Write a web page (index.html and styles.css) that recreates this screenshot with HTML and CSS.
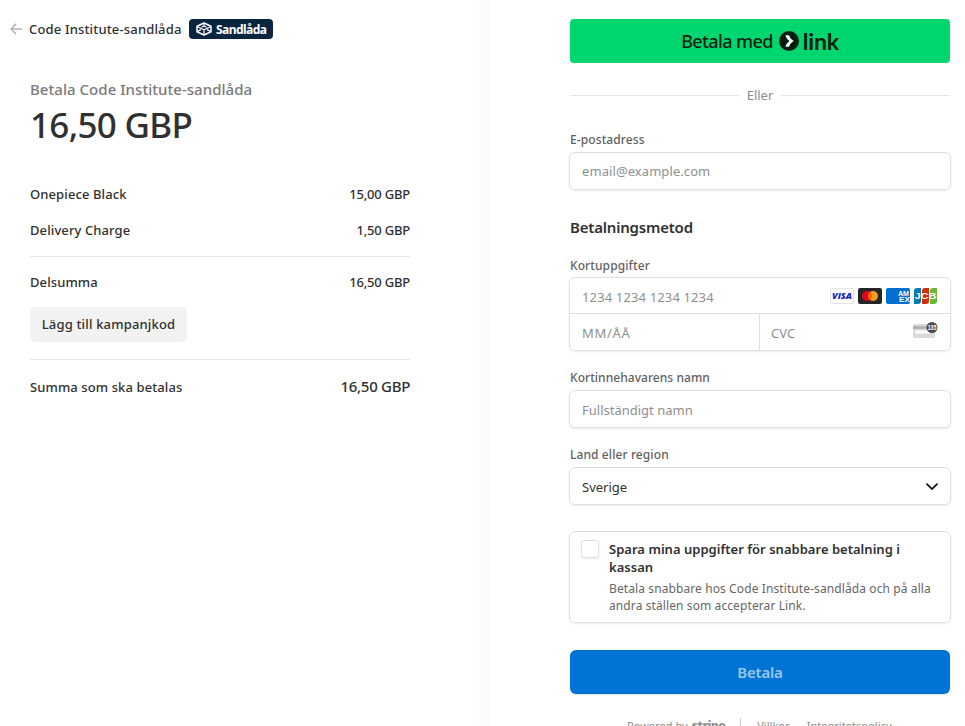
FILE: index.html
```html
<!DOCTYPE html>
<html lang="sv">
<head>
<meta charset="utf-8">
<title>Code Institute-sandlåda</title>
<link rel="stylesheet" href="styles.css">
</head>
<body>
<div class="checkout">
  <section class="summary">
    <header class="merchant">
      <svg class="back" width="12" height="12" viewBox="0 0 12 12"><path d="M6 .9 1 6l5 5.1M1 6h11" fill="none" stroke="#b3b3b3" stroke-width="1.5"/></svg>
      <span class="merchant-name">Code Institute-sandlåda</span>
      <span class="badge">
        <svg width="16" height="14" viewBox="0 0 16 14" fill="none" stroke="#fff" stroke-width="1.5" stroke-linejoin="round"><path d="M8 1 15 4.200v5.600L8 13 1 9.800V4.200z"/><path d="M1.500 4.700 8 7.800l6.500-3.100M8 7.800V13M1.500 9.400 5 7.600M14.500 9.400 11 7.600M8 1v2.500M5.500 5.200 8 4l2.500 1.200" stroke-width="1.200"/></svg>
        <span class="badge-text">Sandlåda</span>
      </span>
    </header>
    <h1 class="pay-title">Betala Code Institute-sandlåda</h1>
    <div class="amount">16,50 GBP</div>
    <div class="items">
      <div class="row"><span>Onepiece Black</span><span class="price">15,00 GBP</span></div>
      <div class="row"><span>Delivery Charge</span><span class="price">1,50 GBP</span></div>
    </div>
    <div class="subtotal">
      <div class="row"><span>Delsumma</span><span class="price">16,50 GBP</span></div>
      <button class="promo">Lägg till kampanjkod</button>
    </div>
    <div class="row total"><span>Summa som ska betalas</span><span class="total-price">16,50 GBP</span></div>
  </section>

  <main class="payment">
    <button class="link-pay">
      <span class="link-text">Betala med</span>
      <svg width="20" height="20" viewBox="0 0 20 20"><circle cx="10" cy="10" r="10" fill="#011e0f"/><path d="M6.400 4.200h3.700c.6 2.400 2.400 4.500 4.900 5.800-2.500 1.300-4.300 3.400-4.900 5.800H6.400c.6-2.400 2.200-4.400 4.200-5.800-2-1.400-3.600-3.400-4.200-5.800z" fill="#fff"/></svg>
      <span class="link-word">link</span>
    </button>
    <div class="divider"><span>Eller</span></div>

    <label class="label l-email">E-postadress</label>
    <div class="field email"><span>email@example.com</span></div>

    <h2 class="heading">Betalningsmetod</h2>
    <label class="label l-card">Kortuppgifter</label>
    <div class="card-box">
      <div class="card-number">
        <span class="p-number">1234 1234 1234 1234</span>
        <div class="brands">
          <svg width="24" height="16" viewBox="0 0 24 16"><rect x=".5" y=".5" width="23" height="15" rx="1.500" fill="#fff" stroke="#e3e3e3"/><text x="12" y="11" class="visa" textLength="20" lengthAdjust="spacingAndGlyphs">VISA</text></svg>
          <svg width="24" height="16" viewBox="0 0 24 16"><rect width="24" height="16" rx="2" fill="#252525"/><circle cx="9" cy="8" r="5" fill="#eb001b"/><circle cx="15" cy="8" r="5" fill="#f79e1b"/><path d="M12 4a5 5 0 0 1 0 8 5 5 0 0 1 0-8z" fill="#ff5f00"/></svg>
          <svg width="24" height="16" viewBox="0 0 24 16"><rect width="24" height="16" rx="2" fill="#016fd0"/><text x="12" y="8.300" class="amex" textLength="11" lengthAdjust="spacingAndGlyphs">AM</text><text x="13" y="14" class="amex" textLength="11" lengthAdjust="spacingAndGlyphs">EX</text></svg>
          <svg width="24" height="16" viewBox="0 0 24 16"><path d="M3 0h4v13a3 3 0 0 1-3 3H0V3a3 3 0 0 1 3-3z" fill="#047ab1"/><path d="M11 0h4v13a3 3 0 0 1-3 3H8V3a3 3 0 0 1 3-3z" fill="#d42d06"/><path d="M19 0h4v13a3 3 0 0 1-3 3h-4V3a3 3 0 0 1 3-3z" fill="#67b637"/><text x=".5" y="11" class="jcb" textLength="22" lengthAdjust="spacingAndGlyphs">JCB</text></svg>
        </div>
      </div>
      <div class="card-row">
        <div class="card-cell"><span class="p-exp">MM/ÅÅ</span></div>
        <div class="card-cell cvc"><span>CVC</span>
          <svg class="cvc-icon" width="25" height="18" viewBox="0 0 25 18"><rect y="2" width="22" height="14" rx="2" fill="#dadada"/><rect y="4" width="22" height="3" fill="#b3b3b3"/><rect x="2" y="8.500" width="15" height="3" rx="1" fill="#fff"/><circle cx="19" cy="5.500" r="5.500" fill="#4d4d4d"/><text x="19" y="8" class="digits" textLength="8.500" lengthAdjust="spacingAndGlyphs">135</text></svg>
        </div>
      </div>
    </div>

    <label class="label l-name">Kortinnehavarens namn</label>
    <div class="field name"><span>Fullständigt namn</span></div>

    <label class="label l-country">Land eller region</label>
    <div class="field select"><span>Sverige</span>
      <svg class="chevron" width="12" height="8" viewBox="0 0 12 8"><path d="M1 1.200 6 6.200l5-5" fill="none" stroke="#111" stroke-width="1.700" stroke-linecap="round" stroke-linejoin="round"/></svg>
    </div>

    <div class="save">
      <span class="checkbox"></span>
      <div>
        <div class="save-title">Spara mina uppgifter för snabbare betalning i<br>kassan</div>
        <div class="save-text">Betala snabbare hos Code Institute-sandlåda och på alla<br>andra ställen som accepterar Link.</div>
      </div>
    </div>

    <button class="submit">Betala</button>
    <footer class="footer">
      <span>Powered by</span><span class="stripe">stripe</span><i class="bar"></i><span>Villkor</span><span class="privacy">Integritetspolicy</span>
    </footer>
  </main>
</div>
</body>
</html>
```

FILE: styles.css
```css
* { box-sizing: border-box; }
body { margin: 0; height: 726px; overflow: hidden; background: #fff; color: #303030; font: 500 13px/18px "Noto Sans", "Open Sans", sans-serif; letter-spacing: .1px; }
button { border: 0; padding: 0; font: inherit; color: inherit; letter-spacing: inherit; }
svg { display: block; flex: none; }
span { white-space: nowrap; }
h1, h2 { margin: 0; }

.checkout { display: grid; grid-template-columns: 490px 475px; height: 726px; overflow: hidden; }
.summary { padding: 19px 80px 0 30px; background: linear-gradient(to right, #fff 470px, #fbfbfb 487px, #f8f8f8 490px); }
.merchant { display: flex; align-items: center; height: 20px; margin-left: -20px; }
.merchant-name { width: 160px; margin-left: 7px; letter-spacing: .16px; }
.badge { display: flex; align-items: center; gap: 4px; width: 84px; height: 20px; padding-left: 7px; border-radius: 4px; background: #0a2540; color: #fff; font-size: 12px; font-weight: 700; letter-spacing: -.55px; }
.badge-text { padding-top: 1px; }
.pay-title { margin-top: 40px; font-size: 15px; line-height: 20px; font-weight: 500; letter-spacing: .04px; color: #7a7a7a; }
.amount { margin-top: 4px; font-size: 35px; line-height: 44px; font-weight: 500; letter-spacing: -.7px; }
.items { height: 72px; margin-top: 38px; }
.row { display: flex; justify-content: space-between; height: 18px; margin-bottom: 18px; }
.price { letter-spacing: -.2px; }
.subtotal { height: 104px; padding-top: 16px; margin-top: -1px; border-top: 1px solid #e6e6e6; border-bottom: 1px solid #e6e6e6; }
.subtotal .row { margin-bottom: 16px; }
.promo { display: block; width: 157px; height: 35px; padding-bottom: 1px; border-radius: 5px; background: #f2f2f2; letter-spacing: .17px; }
.total { margin-top: 18px; }
.total-price { margin-top: -1px; font-size: 15px; letter-spacing: -.3px; }

.payment { padding: 19px 15px 0 80px; }
.link-pay { display: flex; align-items: center; justify-content: center; width: 380px; height: 44px; border-radius: 4px; background: #00d66f; color: #011e0f; }
.link-text { margin-right: 6px; font-size: 18px; font-weight: 500; letter-spacing: -.6px; }
.link-word { margin-left: 4px; padding-bottom: 1px; font: 700 23px/24px Lato, sans-serif; letter-spacing: -.2px; }
.divider { display: flex; align-items: center; gap: 8px; height: 18px; margin-top: 23px; color: #8c8c8c; font-weight: 400; letter-spacing: 0; }
.divider::before, .divider::after { content: ""; flex: 1; height: 1px; background: #e6e6e6; }
.label { display: block; height: 17px; line-height: 17px; font-size: 12px; color: #5f5f5f; }
.l-email { margin-top: 27px; }
.l-name { letter-spacing: .05px; }
.field { display: flex; align-items: center; justify-content: space-between; width: 382px; height: 38px; margin: 4px -1px 0; padding: 0 12px; border: 1px solid #e0e0e0; border-radius: 6px; box-shadow: 0 1px 2px #00000014; color: #8f8f8f; font-weight: 400; letter-spacing: .08px; }
.name { padding-top: 2px; letter-spacing: 0; }
.select { color: #303030; letter-spacing: 0; }
.select span { padding-top: 2px; }
.chevron { margin-top: 2px; }
.heading { margin: 27px 0 20px; font-size: 15px; line-height: 20px; font-weight: 600; letter-spacing: -.2px; }
.card-box { width: 382px; height: 74px; margin: 3px -1px 0; border: 1px solid #e0e0e0; border-radius: 6px; box-shadow: 0 1px 2px #00000014; color: #8f8f8f; font-weight: 400; }
.card-number { display: flex; align-items: center; justify-content: space-between; height: 36px; padding: 0 12px; border-bottom: 1px solid #e0e0e0; }
.p-number { padding-top: 2px; letter-spacing: .14px; }
.brands { display: flex; gap: 4px; padding-top: 1px; }
.card-row { display: grid; grid-template-columns: 189px 191px; height: 36px; }
.card-cell { display: flex; align-items: center; justify-content: space-between; padding: 2px 12px 0; }
.p-exp { letter-spacing: .7px; }
.cvc { padding-left: 11px; border-left: 1px solid #e0e0e0; }
.cvc-icon { margin-top: -4px; }
.visa { font: italic 800 9px "Open Sans", sans-serif; letter-spacing: 0; fill: #1a1fc4; text-anchor: middle; }
.amex { font: 700 7px "Liberation Sans", sans-serif; letter-spacing: 0; fill: #fff; }
.jcb { font: 700 9px "Liberation Sans", sans-serif; letter-spacing: 0; fill: #fff; }
.digits { font: 700 6.500px "Liberation Sans", sans-serif; letter-spacing: 0; fill: #fff; text-anchor: middle; }
.l-name { margin-top: 18px; }
.l-country { margin-top: 18px; }
.save { display: flex; width: 382px; height: 92px; margin: 26px -1px 0; padding: 8px 11px; border: 1px solid #e0e0e0; border-radius: 6px; box-shadow: 0 1px 2px #00000014; white-space: nowrap; }
.checkbox { flex: none; width: 18px; height: 18px; margin-right: 10px; border: 1px solid #e0e0e0; border-radius: 3px; box-shadow: 0 1px 2px #00000014; }
.save-title { font-weight: 600; letter-spacing: .02px; }
.save-text { margin-top: 4px; font-size: 12px; line-height: 17px; font-weight: 400; letter-spacing: .1px; color: #666; }
.submit { display: block; width: 380px; height: 44px; margin-top: 27px; border-radius: 6px; background: #0074d4; color: #99c7ee; font-size: 15px; font-weight: 600; letter-spacing: -.2px; box-shadow: 0 1px 2px #00000020; }
.footer { display: flex; align-items: center; height: 18px; margin: 23px 0 0 57px; color: #8c8c8c; font-size: 11px; font-weight: 400; letter-spacing: .04px; }
.stripe { margin-left: 4px; font-weight: 800; font-size: 12.500px; letter-spacing: -.6px; }
.bar { width: 1px; height: 14px; margin: -2px 16px 0 15px; background: #ccc; }
.privacy { margin-left: 17px; }
```
